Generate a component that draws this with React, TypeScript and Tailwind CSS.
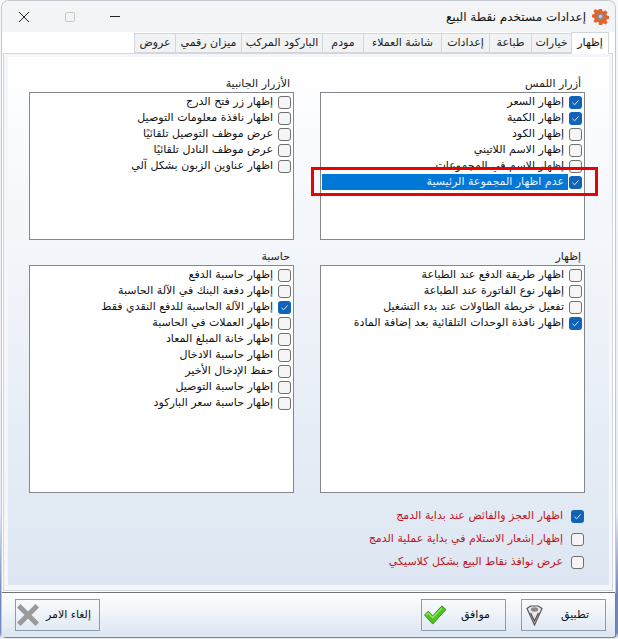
import React from 'react';

const FONT = "font-['DejaVu_Sans',sans-serif]";

interface Item {
    label: string;
    checked?: boolean;
}

const touchItems: Item[] = [
    { label: 'إظهار السعر', checked: true },
    { label: 'إظهار الكمية', checked: true },
    { label: 'إظهار الكود' },
    { label: 'إظهار الاسم اللاتيني' },
    { label: 'إظهار الاسم في المجموعات' },
];

const sideItems: Item[] = [
    { label: 'إظهار زر فتح الدرج' },
    { label: 'اظهار نافذة معلومات التوصيل' },
    { label: 'عرض موظف التوصيل تلقائيًا' },
    { label: 'عرض موظف النادل تلقائيًا' },
    { label: 'اظهار عناوين الزبون بشكل آلي' },
];

const showItems: Item[] = [
    { label: 'اظهار طريقة الدفع عند الطباعة' },
    { label: 'إظهار نوع الفاتورة عند الطباعة' },
    { label: 'تفعيل خريطة الطاولات عند بدء التشغيل' },
    { label: 'إظهار نافذة الوحدات التلقائية بعد إضافة المادة', checked: true },
];

const calcItems: Item[] = [
    { label: 'إظهار حاسبة الدفع' },
    { label: 'إظهار دفعة البنك في الآلة الحاسبة' },
    { label: 'إظهار الآلة الحاسبة للدفع النقدي فقط', checked: true },
    { label: 'إظهار العملات في الحاسبة' },
    { label: 'إظهار خانة المبلغ المعاد' },
    { label: 'اظهار حاسبة الادخال' },
    { label: 'حفظ الإدخال الأخير' },
    { label: 'إظهار حاسبة التوصيل' },
    { label: 'إظهار حاسبة سعر الباركود' },
];

const tabs = [
    { label: 'خيارات', w: 'w-[40px]' },
    { label: 'طباعة', w: 'w-[42px]' },
    { label: 'إعدادات', w: 'w-[48px]' },
    { label: 'شاشة العملاء', w: 'w-[78px]' },
    { label: 'مودم', w: 'w-[41px]' },
    { label: 'الباركود المركب', w: 'w-[81px]' },
    { label: 'ميزان رقمي', w: 'w-[66px]' },
    { label: 'عروض', w: 'w-[41px]' },
];

const CheckBox = ({ checked }: { checked?: boolean }) =>
    checked ? (
        <span className="flex h-[13px] w-[13px] shrink-0 items-center justify-center rounded-[3px] bg-[#0f63b8]">
            <svg width="9" height="9" viewBox="0 0 9 9" fill="none">
                <path d="M1.5 4.8L3.6 6.8L7.6 2.4" stroke="#dbe9f7" strokeWidth="1" />
            </svg>
        </span>
    ) : (
        <span className="h-[13px] w-[13px] shrink-0 rounded-[3px] border border-[#6f6f6f] bg-[#f5f5f5]" />
    );

const Row = ({ item }: { item: Item }) => (
    <div className="flex h-[16px] items-center gap-[5px] pr-[2px] text-[11px] text-[#111]">
        <CheckBox checked={item.checked} />
        <span className="whitespace-nowrap">{item.label}</span>
    </div>
);

const ListGroup = ({ title, items, height, children }: { title: string; items: Item[]; height: string; children?: React.ReactNode }) => (
    <div className="w-[265px]">
        <div className="flex h-[16px] items-center pr-[4px] text-[11px] text-[#222]">{title}</div>
        <div className={`relative border border-[#85878c] bg-white pt-[1px] ${height}`}>
            {items.map((item) => (
                <Row key={item.label} item={item} />
            ))}
            {children}
        </div>
    </div>
);

const BottomOption = ({ label, checked }: { label: string; checked?: boolean }) => (
    <div className="flex h-[23px] items-center gap-[8px] text-[11px] text-[#c0141c]">
        <CheckBox checked={checked} />
        <span className="whitespace-nowrap">{label}</span>
    </div>
);

const FooterButton = ({ label, icon, className }: { label: string; icon: React.ReactNode; className: string }) => (
    <button className={`flex h-[32px] w-[85px] items-center justify-between border border-[#8c9bb0] bg-transparent text-[11px] text-[#111] ${className}`}>
        <span>{label}</span>
        {icon}
    </button>
);

const App: React.FC = () => {
    return (
        <div dir="rtl" className={`${FONT} h-[639px] w-[618px] overflow-hidden bg-[linear-gradient(to_bottom,#f6f8fc_0%,#e6ecf7_80%,#6f87c0_93%,#6f87c0_99%,#ffffff_100%)] pl-[1px] pr-[2px]`}>
            <div className="flex h-[637px] w-[615px] flex-col rounded-t-[8px] border border-b-0 border-[#c4c8d0] bg-white">
                {/* title bar */}
                <div className="flex h-[31px] shrink-0 items-center rounded-t-[8px] bg-[#f3f4f6] pr-[6px]">
                    <svg width="17" height="17" viewBox="0 0 18 18" className="shrink-0">
                        <path
                            d="M7.4 1h3.2l.4 2.2 1.4.6 1.9-1.3 2.2 2.2-1.3 1.9.6 1.4 2.2.4v3.2l-2.2.4-.6 1.4 1.3 1.9-2.2 2.2-1.9-1.3-1.4.6-.4 2.2H7.4L7 15.2l-1.4-.6-1.9 1.3-2.2-2.2 1.3-1.9-.6-1.4-2.2-.4V7l2.2-.4.6-1.4-1.3-1.9 2.2-2.2 1.9 1.3L7 1.8z"
                            fill="#e2622b"
                        />
                        <circle cx="9" cy="9" r="3.8" fill="#858a91" />
                        <circle cx="9" cy="9" r="1.8" fill="#c9cdd2" />
                    </svg>
                    <span className="mr-[6px] text-[12px] text-[#111]">إعدادات مستخدم نقطة البيع</span>
                    <div className="mr-auto flex items-center pl-[16px]">
                        <span className="h-px w-[10px] bg-[#222]" />
                        <span className="mr-[35px] h-[10px] w-[10px] rounded-[2px] border border-[#c8c8c8]" />
                        <svg width="12" height="12" viewBox="0 0 12 12" className="mr-[35px]">
                            <path d="M1 1L11 11M11 1L1 11" stroke="#222" strokeWidth="1" />
                        </svg>
                    </div>
                </div>

                {/* tabs */}
                <div className="z-10 flex h-[21px] shrink-0 items-end pr-[6px]">
                    <div className="mb-[-1px] flex h-[22px] w-[38px] items-center justify-center border border-b-0 border-[#d3d7dd] bg-white text-[11px] text-[#111]">
                        إظهار
                    </div>
                    {tabs.map((tab) => (
                        <div key={tab.label} className={`flex h-[20px] items-center justify-center border-b border-l border-t border-[#d3d7dd] bg-[#f1f2f4] text-[11px] text-[#222] ${tab.w}`}>
                            {tab.label}
                        </div>
                    ))}
                </div>

                {/* page */}
                <div className="ml-[1px] mr-[2px] flex h-[538px] shrink-0 flex-col border border-[#d3d7dd] bg-[#f4f6fa] pb-[5px] pl-[4px] pr-[3px] pt-[3px]">
                    <div className="flex flex-1 flex-col bg-gradient-to-b from-white to-[#dde6f2] pl-[21px] pr-[24px] pt-[19px]">
                        <div className="flex justify-between">
                            <ListGroup title="أزرار اللمس" items={touchItems} height="h-[148px]">
                                <div className="absolute right-[2px] top-[81px] flex h-[16px] items-center gap-[1px] text-[11px] text-[#e8f2fb]">
                                    <CheckBox checked />
                                    <span className="w-[246px] bg-[#0078d7] pr-[4px] leading-[16px]">عدم اظهار المجموعة الرئيسية</span>
                                </div>
                                <div className="absolute right-[-14px] top-[74px] h-[29px] w-[287px] border-[3px] border-[#ec0000]" />
                            </ListGroup>
                            <ListGroup title="الأزرار الجانبية" items={sideItems} height="h-[148px]" />
                        </div>
                        <div className="mt-[9px] flex justify-between">
                            <ListGroup title="إظهار" items={showItems} height="h-[228px]" />
                            <ListGroup title="حاسبة" items={calcItems} height="h-[228px]" />
                        </div>
                        <div className="mt-[12px] flex flex-col pr-px">
                            <BottomOption label="اظهار العجز والفائض عند بداية الدمج" checked />
                            <BottomOption label="إظهار إشعار الاستلام في بداية عملية الدمج" />
                            <BottomOption label="عرض نوافذ نقاط البيع بشكل كلاسيكي" />
                        </div>
                    </div>
                </div>

                {/* footer */}
                <div className="mt-[1px] flex min-h-0 flex-1 items-center rounded-b-[3px] border-t border-[#6f7276] bg-gradient-to-b from-white to-[#dce5f1] pl-[13px] pr-[9px] shadow-[1px_1px_1px_#777]">
                    <FooterButton
                        label="تطبيق"
                        className="pl-[4px] pr-[16px]"
                        icon={
                            <svg width="17" height="21" viewBox="0 0 17 21">
                                <path d="M1 3.5L4.5 1H12.5L16 3.5L8.5 20Z" fill="#e8e8e8" stroke="#555" strokeWidth="1.2" />
                                <path d="M4.5 8L8.5 16L12.5 8" fill="none" stroke="#555" strokeWidth="1.4" />
                                <ellipse cx="8.5" cy="4.5" rx="3.6" ry="2.2" fill="#8a8a8a" />
                            </svg>
                        }
                    />
                    <FooterButton
                        label="موافق"
                        className="mr-[15px] pl-[1px] pr-[15px]"
                        icon={
                            <svg width="24" height="20" viewBox="0 0 25 22">
                                <path d="M1 11L5 7L10 12L20 1L24.5 5L10 21Z" fill="#4fc41c" stroke="#2e8c10" strokeWidth="1" />
                                <path d="M3 11L5 9L10 14L20 3.5" fill="none" stroke="#a5ec6e" strokeWidth="1.2" />
                            </svg>
                        }
                    />
                    <FooterButton
                        label="إلغاء الامر"
                        className="mr-auto pl-[1px] pr-[8px]"
                        icon={
                            <svg width="22" height="22" viewBox="0 0 22 22">
                                <path d="M3.5 3.5L18.5 18.5M18.5 3.5L3.5 18.5" stroke="#9a9a9a" strokeWidth="5" strokeLinecap="square" />
                            </svg>
                        }
                    />
                </div>
            </div>
        </div>
    );
};

export default App;
